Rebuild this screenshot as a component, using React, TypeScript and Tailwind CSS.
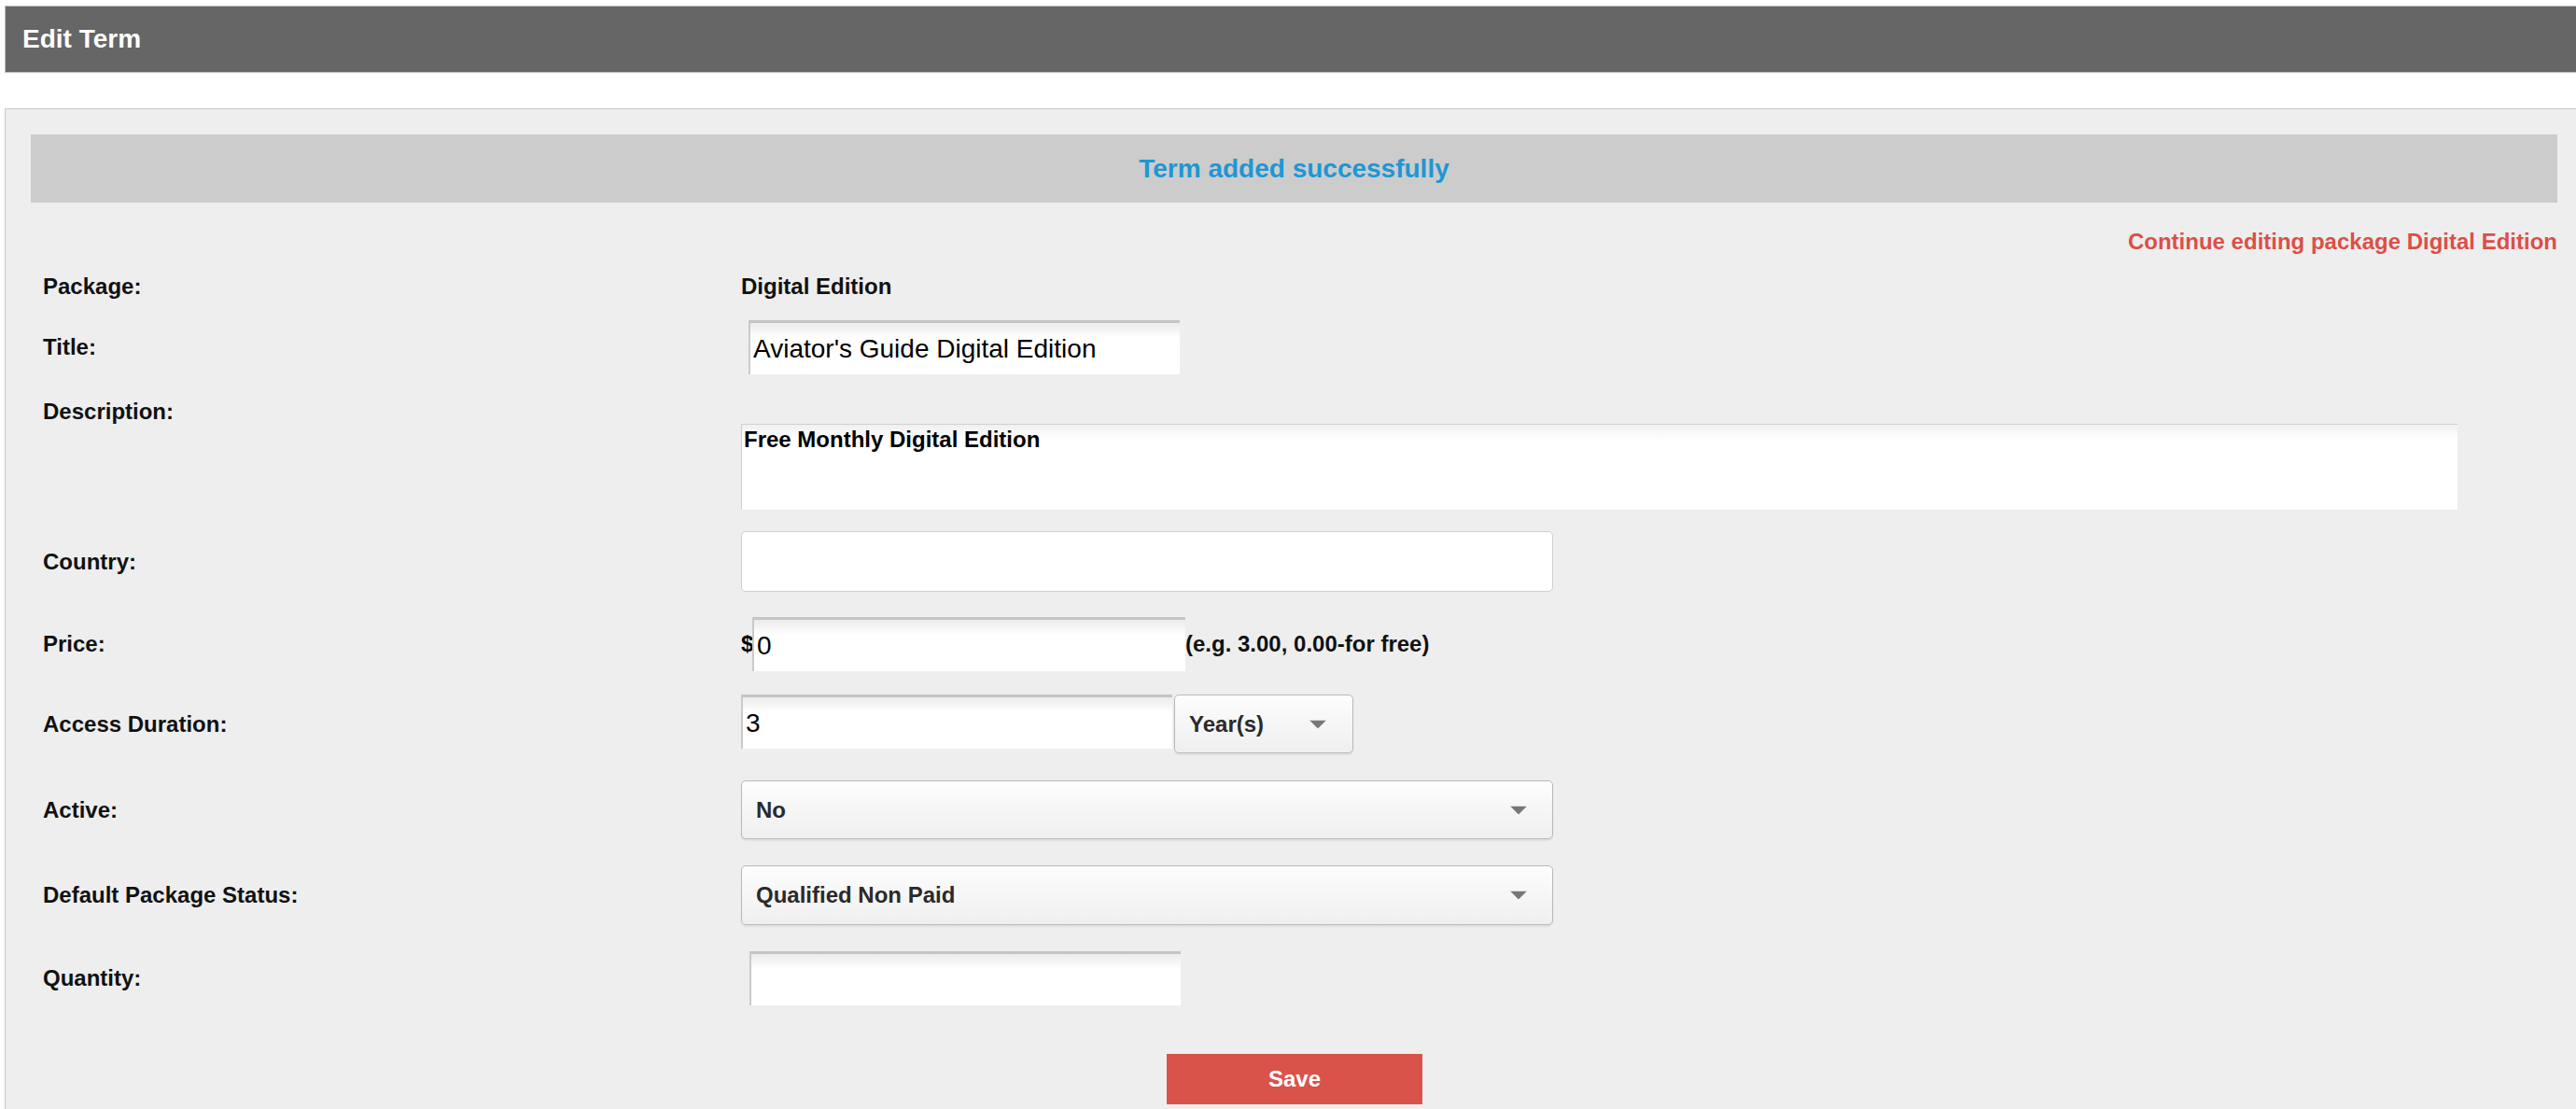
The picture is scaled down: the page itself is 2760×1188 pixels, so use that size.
import React from 'react';

const insetInput =
    'h-[58px] w-[462px] bg-[linear-gradient(to_bottom,#ebebeb,#ffffff_16px)] border-t-[3px] border-t-[#c4c4c4] border-l-2 border-l-[#cacaca] pl-[3px] text-[28px] font-normal text-black outline-none';

function Label({ children }: { children: React.ReactNode }) {
    return <div className="w-[748px] flex-shrink-0 text-[24px] font-bold leading-[28px] text-[#111]">{children}</div>;
}

function FakeSelect({ value, width, arrowRight, height }: { value: string; width: string; arrowRight: string; height: string }) {
    return (
        <div
            className={`relative flex items-center rounded-[5px] border border-[#b8b8b8] bg-[linear-gradient(to_bottom,#fdfdfd,#efefef)] shadow-[0_2px_2px_rgba(0,0,0,0.06)] pl-[15px] text-[24px] font-bold text-[#2a2a2a] ${width} ${height}`}
        >
            {value}
            <svg className={`absolute top-1/2 -translate-y-1/2 ${arrowRight}`} width="18" height="9" viewBox="0 0 18 9">
                <path d="M0 0 H18 L9 9 Z" fill="#777" />
            </svg>
        </div>
    );
}

export default function App() {
    return (
        <div className="min-h-[1188px] bg-white pt-[6px] pl-[5px] font-['Liberation_Sans',Arial,Helvetica,sans-serif] overflow-hidden">
            {/* Header */}
            <div className="flex h-[72px] items-center border border-[#bdbdbd] border-r-0 bg-[#666] pl-[18px]">
                <h1 className="text-[28px] font-bold text-white">Edit Term</h1>
            </div>

            {/* Panel */}
            <div className="mt-[38px] min-h-[1072px] border-l border-t border-[#c8c8c8] bg-[#eeeeee] pt-[27px] pl-[27px] pr-[20px]">
                {/* Message */}
                <div className="flex h-[73px] items-center justify-center bg-[#cccccc] text-[28px] font-bold text-[#1d97d5]">
                    Term added successfully
                </div>

                <div className="mt-[28px] text-right text-[24px] font-bold leading-[28px] text-[#dc4f47]">
                    Continue editing package Digital Edition
                </div>

                <div className="pl-[13px]">
                    {/* Package */}
                    <div className="mt-[20px] flex items-center">
                        <Label>Package:</Label>
                        <div className="text-[24px] font-bold leading-[28px] text-[#111]">Digital Edition</div>
                    </div>

                    {/* Title */}
                    <div className="mt-[22px] flex items-center">
                        <Label>Title:</Label>
                        <input readOnly defaultValue="Aviator's Guide Digital Edition" className={`ml-[8px] ${insetInput}`} />
                    </div>

                    {/* Description */}
                    <div className="mt-[23px] flex items-start">
                        <div className="mt-[3px]">
                            <Label>Description:</Label>
                        </div>
                        <div className="mt-[30px] h-[92px] w-[1839px] border-t border-l border-[#d0d0d0] bg-[linear-gradient(to_bottom,#f0f0f0,#ffffff_16px)] pl-[2px] pt-[2px] text-[24px] font-bold leading-[28px] text-black">
                            Free Monthly Digital Edition
                        </div>
                    </div>

                    {/* Country */}
                    <div className="mt-[23px] flex items-center">
                        <Label>Country:</Label>
                        <div className="h-[65px] w-[870px] rounded-[5px] border border-[#cfcfcf] bg-white" />
                    </div>

                    {/* Price */}
                    <div className="mt-[27px] flex items-center">
                        <Label>Price:</Label>
                        <span className="w-[12px] text-[24px] font-bold text-black">$</span>
                        <input readOnly defaultValue="0" className={`${insetInput} w-[464px] h-[56px]`} />
                        <span className="text-[24px] font-bold text-[#111]">(e.g. 3.00, 0.00-for free)</span>
                    </div>

                    {/* Access Duration */}
                    <div className="mt-[25px] flex items-center">
                        <Label>Access Duration:</Label>
                        <div className="flex items-start gap-[2px]">
                            <input readOnly defaultValue="3" className={insetInput} />
                            <FakeSelect value="Year(s)" width="w-[192px]" height="h-[63px]" arrowRight="right-[28px]" />
                        </div>
                    </div>

                    {/* Active */}
                    <div className="mt-[29px] flex items-center">
                        <Label>Active:</Label>
                        <FakeSelect value="No" width="w-[870px]" height="h-[63px]" arrowRight="right-[27px]" />
                    </div>

                    {/* Default Package Status */}
                    <div className="mt-[28px] flex items-center">
                        <Label>Default Package Status:</Label>
                        <FakeSelect value="Qualified Non Paid" width="w-[870px]" height="h-[64px]" arrowRight="right-[27px]" />
                    </div>

                    {/* Quantity */}
                    <div className="mt-[28px] flex items-center">
                        <Label>Quantity:</Label>
                        <input readOnly defaultValue="" className={`ml-[9px] ${insetInput}`} />
                    </div>
                </div>

                {/* Save */}
                <div className="mt-[52px] pl-[1217px]">
                    <button className="h-[54px] w-[274px] bg-[#d9534a] text-[24px] font-bold text-white">Save</button>
                </div>
            </div>
        </div>
    );
}
